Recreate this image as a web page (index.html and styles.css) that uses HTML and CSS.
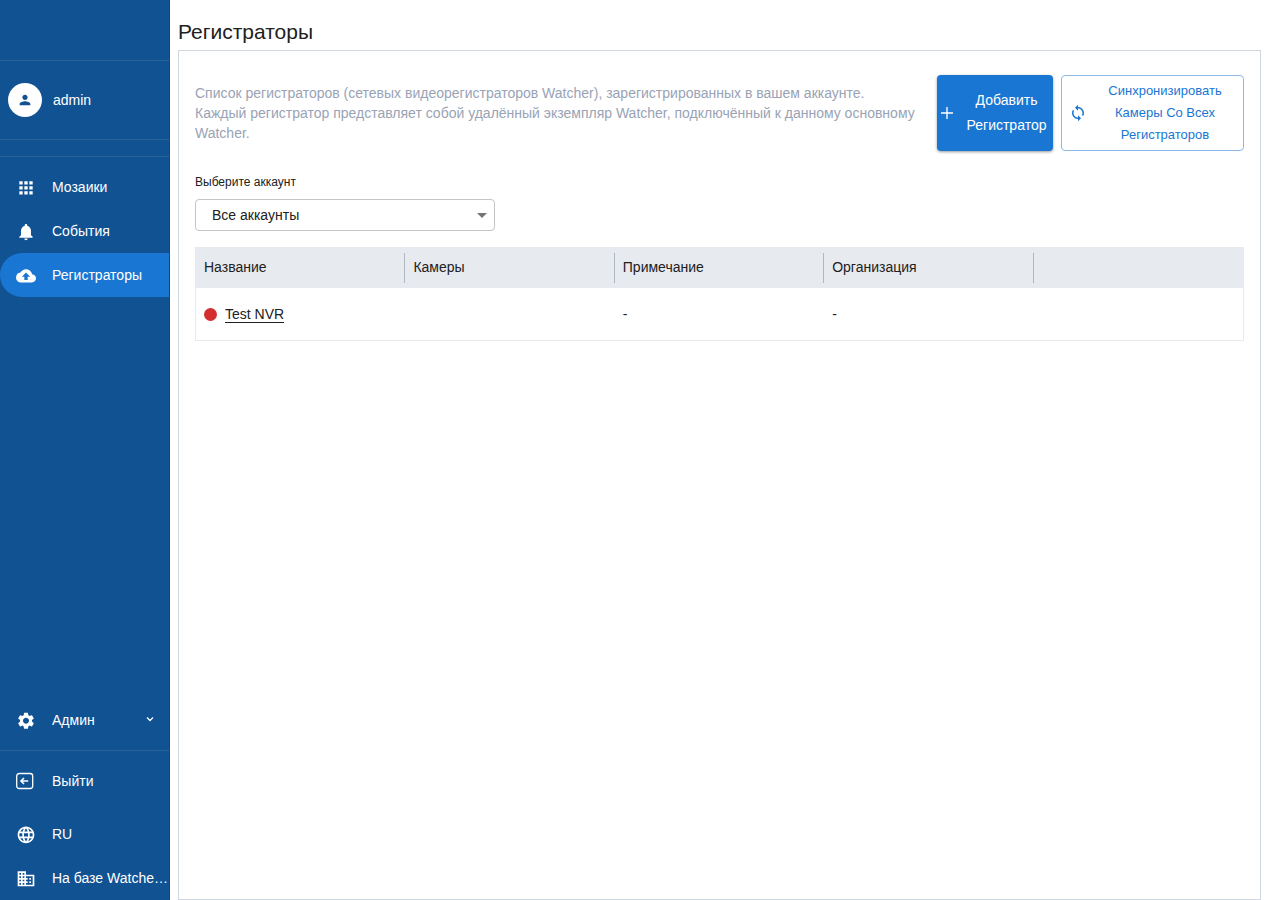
FILE: index.html
```html
<!DOCTYPE html>
<html lang="ru">
<head>
<meta charset="utf-8">
<title>Регистраторы</title>
<link rel="stylesheet" href="styles.css">
</head>
<body>
<div class="app">
  <aside class="sidebar">
    <a class="user" href="#">
      <span class="avatar"><svg width="16" height="16" viewBox="0 0 24 24"><path d="M12 12c2.210 0 4-1.790 4-4s-1.790-4-4-4-4 1.790-4 4 1.790 4 4 4zm0 2c-2.670 0-8 1.340-8 4v2h16v-2c0-2.660-5.330-4-8-4z"/></svg></span>
      <span>admin</span>
    </a>
    <nav class="menu menu-main">
      <a class="item" href="#"><svg viewBox="0 0 24 24"><path d="M4 5h4v4H4zM10 5h4v4h-4zM16 5h4v4h-4zM4 11h4v4H4zM10 11h4v4h-4zM16 11h4v4h-4zM4 17h4v4H4zM10 17h4v4h-4zM16 17h4v4h-4z"/></svg><span class="label">Мозаики</span></a>
      <a class="item" href="#"><svg viewBox="0 -1 24 24"><path d="M12 22c1.100 0 2-.9 2-2h-4c0 1.100.9 2 2 2zm6-6v-5c0-3.070-1.630-5.640-4.500-6.320V4c0-.83-.67-1.500-1.500-1.500s-1.500.67-1.500 1.500v.68C7.640 5.360 6 7.920 6 11v5l-2 2v1h16v-1l-2-2z"/></svg><span class="label">События</span></a>
      <a class="item active" href="#" aria-current="page"><svg viewBox="0 -1 24 24"><path d="M19.350 10.040C18.670 6.590 15.640 4 12 4 9.110 4 6.600 5.640 5.350 8.040 2.340 8.360 0 10.910 0 14c0 3.310 2.690 6 6 6h13c2.760 0 5-2.240 5-5 0-2.640-2.050-4.780-4.650-4.960zM14 13v4h-4v-4H7l5-5 5 5h-3z"/></svg><span class="label">Регистраторы</span></a>
    </nav>
    <nav class="menu menu-admin">
      <button class="item" type="button"><svg viewBox="0 -1 24 24"><path d="M19.140 12.940c.04-.3.06-.61.06-.94 0-.32-.02-.64-.07-.94l2.030-1.580c.18-.14.23-.41.12-.61l-1.920-3.320c-.12-.22-.37-.29-.59-.22l-2.390.96c-.5-.38-1.030-.7-1.620-.94l-.36-2.540c-.04-.24-.24-.41-.48-.41h-3.840c-.24 0-.43.17-.47.41l-.36 2.540c-.59.24-1.130.57-1.620.94l-2.390-.96c-.22-.08-.47 0-.59.22L2.740 8.870c-.12.21-.08.47.12.61l2.030 1.580c-.05.3-.09.63-.09.94s.02.64.07.94l-2.030 1.580c-.18.14-.23.41-.12.61l1.920 3.320c.12.22.37.29.59.22l2.390-.96c.5.38 1.030.7 1.620.94l.36 2.540c.05.24.24.41.48.41h3.840c.24 0 .44-.17.47-.41l.36-2.540c.59-.24 1.130-.56 1.620-.94l2.390.96c.22.08.47 0 .59-.22l1.920-3.320c.12-.22.07-.47-.12-.61l-2.010-1.580zM12 15.600c-1.980 0-3.600-1.620-3.600-3.600s1.620-3.600 3.600-3.600 3.600 1.620 3.600 3.600-1.620 3.600-3.600 3.600z"/></svg><span class="label">Админ</span><span class="chevron"><svg viewBox="0 0 10 10"><path class="line" d="M2 2.500 5 5.500l3-3"/></svg></span></button>
    </nav>
    <div class="menu menu-exit">
      <button class="item" type="button"><svg class="exit" viewBox="0 0 18 18"><rect class="line" x="0.700" y="1.500" width="16" height="15" rx="2.500"/><path class="line thick" d="M12.200 9H5M8 6 5 9l3 3"/></svg><span class="label">Выйти</span></button>
    </div>
    <div class="menu menu-foot">
      <button class="item" type="button"><svg viewBox="0 -1 24 24"><path d="M11.990 2C6.470 2 2 6.480 2 12s4.470 10 9.990 10C17.520 22 22 17.520 22 12S17.520 2 11.990 2zm6.930 6h-2.950c-.32-1.250-.78-2.450-1.380-3.560 1.840.63 3.370 1.910 4.330 3.560zM12 4.040c.83 1.200 1.480 2.530 1.910 3.960h-3.820c.43-1.430 1.080-2.760 1.910-3.960zM4.260 14C4.100 13.360 4 12.690 4 12s.1-1.360.26-2h3.380c-.08.66-.14 1.320-.14 2s.06 1.340.14 2H4.260zm.82 2h2.950c.32 1.250.78 2.450 1.380 3.560-1.840-.63-3.370-1.900-4.330-3.560zm2.950-8H5.080c.96-1.660 2.490-2.930 4.330-3.560C8.810 5.550 8.350 6.750 8.030 8zM12 19.960c-.83-1.200-1.480-2.530-1.910-3.960h3.820c-.43 1.430-1.080 2.760-1.910 3.960zM14.340 14H9.660c-.09-.66-.16-1.320-.16-2s.07-1.350.16-2h4.680c.09.65.16 1.320.16 2s-.07 1.340-.16 2zm.25 5.560c.6-1.110 1.060-2.310 1.380-3.560h2.950c-.96 1.650-2.490 2.930-4.330 3.560zM16.360 14c.08-.66.14-1.320.14-2s-.06-1.340-.14-2h3.380c.16.64.26 1.310.26 2s-.1 1.360-.26 2h-3.380z"/></svg><span class="label">RU</span></button>
      <a class="item" href="#"><svg viewBox="0 -1 24 24"><path d="M12 7V3H2v18h20V7H12zM6 19H4v-2h2v2zm0-4H4v-2h2v2zm0-4H4V9h2v2zm0-4H4V5h2v2zm4 12H8v-2h2v2zm0-4H8v-2h2v2zm0-4H8V9h2v2zm0-4H8V5h2v2zm10 12h-8v-2h2v-2h-2v-2h2v-2h-2V9h8v10zm-2-8h-2v2h2v-2zm0 4h-2v2h2v-2z"/></svg><span class="label">На базе Watcher Network</span></a>
    </div>
  </aside>
  <main class="main">
    <h1 class="title">Регистраторы</h1>
    <section class="panel">
      <div class="intro">
        <p class="description">Список регистраторов (сетевых видеорегистраторов Watcher), зарегистрированных в вашем аккаунте.<br>Каждый регистратор представляет собой удалённый экземпляр Watcher, подключённый к данному основному Watcher.</p>
        <button class="button primary" type="button"><svg viewBox="0 0 24 24"><path d="M20 12.900h-7.100V20h-1.800v-7.100H4v-1.800h7.100V4h1.800v7.100H20z"/></svg><span class="text">Добавить Регистратор</span></button>
        <button class="button outlined" type="button"><svg viewBox="0 0 24 24"><path d="M12 4V1L8 5l4 4V6c3.310 0 6 2.690 6 6 0 1.010-.25 1.970-.7 2.800l1.460 1.460C19.540 15.030 20 13.570 20 12c0-4.420-3.580-8-8-8zm0 14c-3.310 0-6-2.690-6-6 0-1.010.25-1.970.7-2.800L5.240 7.740C4.460 8.970 4 10.430 4 12c0 4.420 3.580 8 8 8v3l4-4-4-4v3z"/></svg><span class="text">Синхронизировать Камеры Со Всех Регистраторов</span></button>
      </div>
      <div class="field">
        <label for="account">Выберите аккаунт</label>
        <div class="select-box">
          <select id="account"><option>Все аккаунты</option></select>
          <svg class="arrow" viewBox="0 0 10 5"><path d="M0 0h10L5 5z"/></svg>
        </div>
      </div>
      <table class="table">
        <thead><tr><th><span>Название</span></th><th><span>Камеры</span></th><th><span>Примечание</span></th><th><span>Организация</span></th><th></th></tr></thead>
        <tbody><tr><td><div class="name"><span class="dot"></span><a href="#">Test NVR</a></div></td><td></td><td>-</td><td>-</td><td></td></tr></tbody>
      </table>
    </section>
  </main>
</div>
</body>
</html>
```

FILE: styles.css
```css
* { box-sizing: border-box; }
body { margin: 0; font-family: "Liberation Sans", Arial, sans-serif; font-size: 14px; line-height: 20px; color: #212121; background: #fff; }
svg { fill: currentColor; flex: none; display: block; }
button, select { font: inherit; color: inherit; }
a { color: inherit; text-decoration: none; }

.app { display: flex; min-height: 100vh; }
.sidebar { width: 170px; flex: none; display: flex; flex-direction: column; padding-top: 60px; background: #115293; border-right: 1px solid #0d4884; color: #fff; }
.user { display: flex; align-items: center; gap: 11px; height: 80px; padding: 0 8px; border: solid #2b6499; border-width: 1px 0; }
.avatar { width: 34px; height: 34px; border-radius: 50%; background: #fff; color: #115293; display: flex; align-items: center; justify-content: center; }
.menu { display: flex; flex-direction: column; }
.menu-main { margin-top: 16px; padding-top: 8px; border-top: 1px solid #2b6499; }
.menu-admin { margin-top: auto; padding-bottom: 8px; border-bottom: 1px solid #2b6499; }
.menu-exit { padding: 8px 0 9px; }
.item { display: flex; align-items: center; width: 100%; height: 44px; padding: 0 0 0 16px; border: 0; background: none; color: #fff; text-align: left; }
.item > svg { width: 20px; height: 20px; margin-right: 16px; }
.item > .exit { width: 18px; height: 18px; margin-right: 18px; }
.item.active { background: #1976d2; border-radius: 22px 0 0 22px; }
.label { flex: 1; min-width: 0; overflow: hidden; white-space: nowrap; text-overflow: ellipsis; }
.chevron { width: 10px; margin: 0 14px; }
.line { fill: none; stroke: currentColor; stroke-width: 1.3; }
.thick { stroke-width: 1.6; }

.main { flex: 1; min-width: 0; display: flex; flex-direction: column; padding: 16px 19px 0 8px; }
.title { margin: 0 0 2px; font-size: 21px; line-height: 32px; font-weight: 400; }
.panel { flex: 1; padding: 24px 16px; border: 1px solid #cfd8e0; }
.intro { display: flex; align-items: center; }
.description { flex: 1; margin: 0; color: #99a3b5; }
.button { display: flex; align-items: center; height: 76px; padding: 0 4px; border-radius: 4px; text-align: center; }
.button svg { width: 18px; height: 18px; }
.button .text { flex: 1; }
.primary { width: 116px; gap: 8px; padding-left: 1px; border: 0; background: #1976d2; color: #fff; line-height: 25px; box-shadow: 0 1px 3px rgba(0, 0, 0, .4); }
.outlined { width: 183px; margin-left: 8px; padding: 0 8px 0 7px; gap: 8px; border: 1px solid #8cbae8; background: #fff; color: #1976d2; font-size: 13px; line-height: 22px; }
.outlined .text { padding: 0 8px; }

.field { margin-top: 21px; width: 300px; }
.field label { display: block; font-size: 12px; line-height: 20px; margin-bottom: 7px; }
.select-box { position: relative; }
.select-box select { display: block; width: 100%; height: 32px; padding: 0 32px 0 16px; border: 1px solid #c4c4c4; border-radius: 4px; background: #fff; appearance: none; }
.arrow { position: absolute; right: 8px; top: 14px; width: 10px; height: 5px; color: #757575; pointer-events: none; }

.table { width: 100%; margin-top: 16px; table-layout: fixed; border-collapse: separate; border-spacing: 0; border: 1px solid #e7eaef; }
.table th { height: 40px; padding: 0; background: #e7eaef; font-weight: 400; text-align: left; }
.table th span { display: block; padding: 4px 8px 6px; border-right: 1px solid #b0b7c0; }
.table td { height: 52px; padding: 0 8px; }
.name { display: flex; align-items: center; gap: 8px; }
.dot { width: 13px; height: 13px; border-radius: 50%; background: #d32f2f; }
.name a { line-height: 16px; border-bottom: 1px solid #212121; }
```
